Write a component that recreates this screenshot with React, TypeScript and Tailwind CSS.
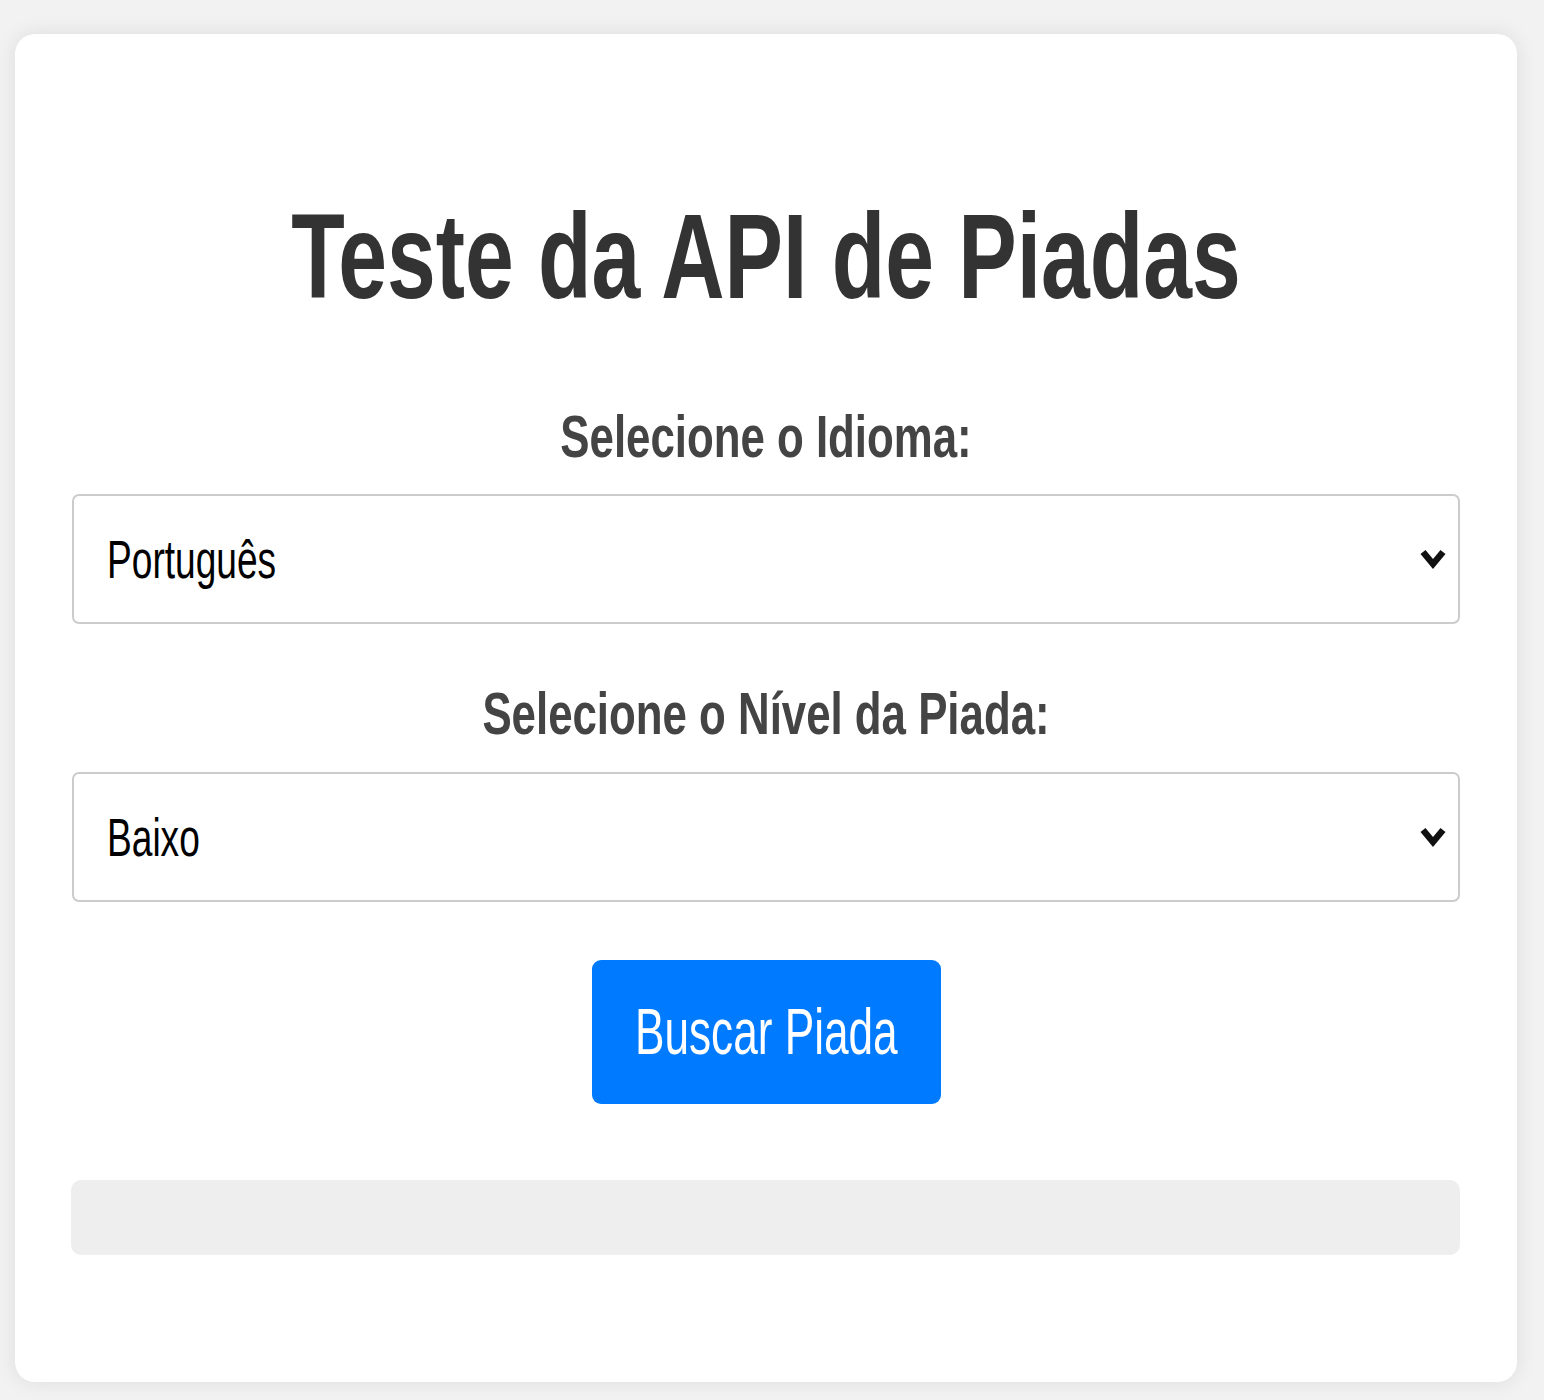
import React from 'react';

const Chevron: React.FC = () => (
  <svg width="28" height="24" viewBox="0 0 28 24" className="shrink-0">
    <polyline points="4,5 14,17 24,5" fill="none" stroke="#111" strokeWidth="6.5" strokeLinecap="butt" strokeLinejoin="miter" />
  </svg>
);

const FakeSelect: React.FC<{ value: string }> = ({ value }) => (
  <div className="flex items-center justify-between h-[130px] border-2 border-[#cccccc] rounded-[7px] bg-white pl-[33px] pr-[11px]">
    <div className="flex-1 text-[53px] leading-none text-black origin-left scale-x-[0.7]">{value}</div>
    <Chevron />
  </div>
);

const App: React.FC = () => {
  return (
    <div className="min-h-[1400px] bg-[#f2f2f2] pt-[34px] pl-[15px] pr-[27px] pb-[18px] font-['Liberation_Sans',Arial,sans-serif]">
      <div className="bg-white rounded-[20px] shadow-[0_0_22px_rgba(0,0,0,0.09)] pt-[162px] pb-[127px] px-[57px]">
        <h1 className="text-[120px] leading-none font-bold text-[#333333] text-center scale-x-[0.73]">
          Teste da API de Piadas
        </h1>
        <div className="mt-[91px] text-[60px] leading-none font-bold text-[#444444] text-center scale-x-[0.73]">
          Selecione o Idioma:
        </div>
        <div className="mt-[27px]">
          <FakeSelect value="Português" />
        </div>
        <div className="mt-[60px] text-[60px] leading-none font-bold text-[#444444] text-center scale-x-[0.73]">
          Selecione o Nível da Piada:
        </div>
        <div className="mt-[28px]">
          <FakeSelect value="Baixo" />
        </div>
        <div className="mt-[58px] flex justify-center">
          <button className="w-[349px] h-[144px] flex items-center justify-center bg-[#007bff] rounded-[9px] text-white text-[64px] leading-none whitespace-nowrap">
            <span className="shrink-0 inline-block scale-x-[0.69]">Buscar Piada</span>
          </button>
        </div>
        <div className="mt-[76px] -ml-px h-[75px] bg-[#eeeeee] rounded-[10px]" />
      </div>
    </div>
  );
};

export default App;
